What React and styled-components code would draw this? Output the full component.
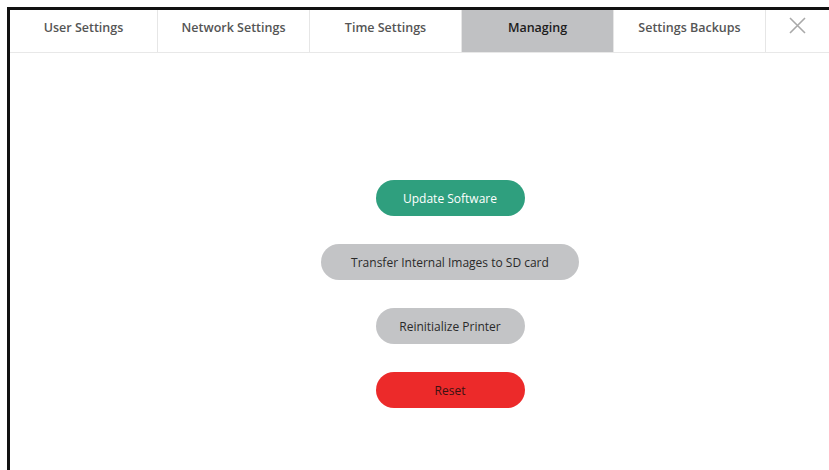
import React, { useState } from 'react';
import styled, { createGlobalStyle } from 'styled-components';

const GlobalStyle = createGlobalStyle`
  html, body {
    margin: 0;
    padding: 0;
    background: #ffffff;
    overflow: hidden;
  }
  body {
    font-family: "Open Sans", "Noto Sans", sans-serif;
  }
`;

const Screen = styled.div`
  margin: 7px 0 0 7px;
  height: calc(100vh - 7px);
  border-top: 3px solid #111;
  border-left: 3px solid #111;
  display: flex;
  flex-direction: column;
  box-sizing: border-box;
`;

const TabBar = styled.nav`
  display: flex;
  height: 42px;
  border-bottom: 1px solid #e8e8e8;
`;

const Tab = styled.button`
  width: 152px;
  flex: none;
  border: none;
  border-right: 1px solid #e6e6e6;
  background: ${({ active }) => (active ? '#c0c1c3' : '#ffffff')};
  color: ${({ active }) => (active ? '#1c1c1c' : '#555555')};
  font-family: inherit;
  font-size: 12.5px;
  font-weight: 600;
  padding: 0 0 7px;
  cursor: pointer;

  &:first-child {
    width: 148px;
  }
`;

const CloseTab = styled.button`
  flex: 1;
  border: none;
  background: #fff;
  display: flex;
  justify-content: center;
  padding: 7px 0 0;
  cursor: pointer;
`;

const Content = styled.main`
  flex: 1;
  display: flex;
  flex-direction: column;
  align-items: center;
  gap: 28px;
  padding: 127px 0 0 61px;
`;

const ActionButton = styled.button`
  height: 36px;
  width: ${({ wide }) => (wide ? '258px' : '149px')};
  border: none;
  border-radius: 18px;
  background: ${({ bg }) => bg};
  color: ${({ fg }) => fg};
  font-family: inherit;
  font-size: 12px;
  cursor: pointer;
`;

const tabs = ['User Settings', 'Network Settings', 'Time Settings', 'Managing', 'Settings Backups'];

export default function App() {
  const [current, setCurrent] = useState('Managing');

  return (
    <>
      <GlobalStyle />
      <Screen>
        <TabBar>
          {tabs.map((t) => (
            <Tab key={t} active={t === current} onClick={() => setCurrent(t)}>
              {t}
            </Tab>
          ))}
          <CloseTab>
            <svg width="17" height="17" viewBox="0 0 17 17">
              <path d="M1 1 L16 16 M16 1 L1 16" stroke="#a9a9a9" strokeWidth="1.6" />
            </svg>
          </CloseTab>
        </TabBar>
        <Content>
          <ActionButton bg="#2f9f7e" fg="#ffffff">Update Software</ActionButton>
          <ActionButton wide bg="#c3c4c6" fg="#2a2a2a">Transfer Internal Images to SD card</ActionButton>
          <ActionButton bg="#c3c4c6" fg="#2a2a2a">Reinitialize Printer</ActionButton>
          <ActionButton bg="#ec2a2a" fg="#3a1212">Reset</ActionButton>
        </Content>
      </Screen>
    </>
  );
}
